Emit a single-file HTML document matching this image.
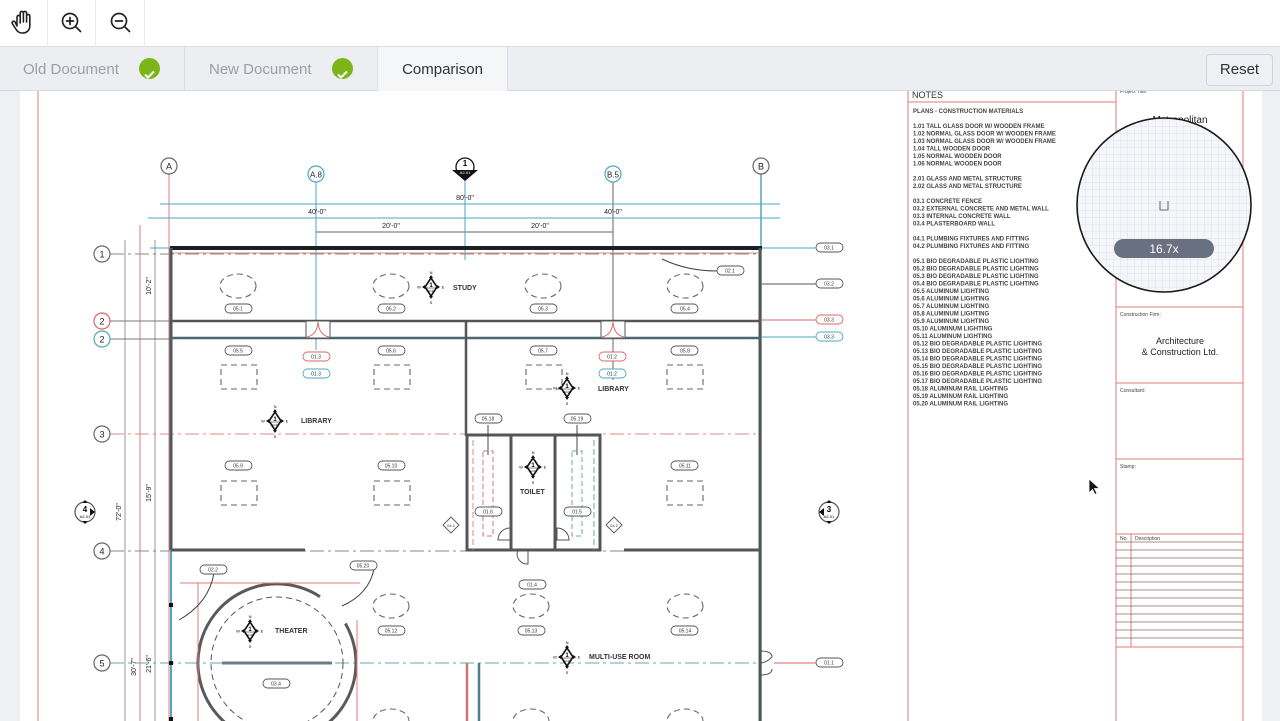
<!DOCTYPE html>
<html><head><meta charset="utf-8"><style>
*{margin:0;padding:0;box-sizing:border-box}
body{width:1280px;height:721px;overflow:hidden;background:#eef0f3;font-family:"Liberation Sans",sans-serif;position:relative}
#tb{position:absolute;left:0;top:0;width:1280px;height:47px;background:#fff;border-bottom:1px solid #dcdfe4}
.tbi{position:absolute;top:0;height:47px;width:48px;border-right:1px solid #e8eaee}
#tabs{position:absolute;left:0;top:47px;width:1280px;height:44px;background:#eceef2;border-bottom:1px solid #d5d8de}
.tab{position:absolute;top:0;height:44px;border-right:1px solid #d9dce2;font-size:15px;color:#9aa0a8;line-height:46px}
.chk{position:absolute;top:12px;width:21px;height:21px;border-radius:50%;background:#7cb518}
#reset{position:absolute;left:1206px;top:7px;width:67px;height:32px;border:1px solid #cfd3da;border-radius:4px;background:#eef0f3;font-size:15px;color:#333;text-align:center;line-height:30px}
#page{position:absolute;left:20px;top:91px;width:1242px;height:630px;background:#fff}
svg text{font-family:"Liberation Sans",sans-serif}
</style></head><body>
<div id="tb">
 <div class="tbi" style="left:0"><svg width="48" height="47" viewBox="0 0 48 47"><path d="M17 26v-9a1.6 1.6 0 013.2 0v6M20.2 22v-9a1.6 1.6 0 013.2 0v9M23.4 21v-8a1.6 1.6 0 013.2 0v9M26.6 22v-6a1.6 1.6 0 013.2 0v10c0 4-3 7-7 7h-1c-3 0-4.5-1.5-6-4l-3.5-5.5a1.6 1.6 0 012.6-1.8L17 26" fill="none" stroke="#222" stroke-width="1.6" stroke-linecap="round" stroke-linejoin="round"/></svg></div>
 <div class="tbi" style="left:48px"><svg width="48" height="47" viewBox="0 0 48 47"><circle cx="22" cy="21" r="7.5" fill="none" stroke="#222" stroke-width="1.7"/><path d="M27.5 26.5l5 5M22 17.5v7M18.5 21h7" stroke="#222" stroke-width="1.7" stroke-linecap="round"/></svg></div>
 <div class="tbi" style="left:97px"><svg width="48" height="47" viewBox="0 0 48 47"><circle cx="22" cy="21" r="7.5" fill="none" stroke="#222" stroke-width="1.7"/><path d="M27.5 26.5l5 5M18.5 21h7" stroke="#222" stroke-width="1.7" stroke-linecap="round"/></svg></div>
</div>
<div id="tabs">
 <div class="tab" style="left:0;width:185px"><span style="position:absolute;left:23px">Old Document</span><div class="chk" style="left:139px;top:11px"><svg width="21" height="21"><path d="M6 10.5l3 3 6-6" fill="none" stroke="#fff" stroke-width="2"/></svg></div></div>
 <div class="tab" style="left:185px;width:193px"><span style="position:absolute;left:24px">New Document</span><div class="chk" style="left:147px;top:11px"><svg width="21" height="21"><path d="M6 10.5l3 3 6-6" fill="none" stroke="#fff" stroke-width="2"/></svg></div></div>
 <div class="tab" style="left:378px;width:130px;background:#f5f6f8;color:#333;text-align:center">Comparison</div>
 <div id="reset">Reset</div>
</div>
<div id="page"></div>
<svg style="position:absolute;left:0;top:91px" width="1280" height="630" viewBox="0 91 1280 630">
<defs>
<g id="comp"><path d="M0-9L6 0 0 9-6 0Z" fill="#fff" stroke="#111" stroke-width="1.6"/><path d="M0-12l2 3h-4zM0 12l2-3h-4zM-9 0l3 2v-4zM9 0l-3 2v-4z" fill="#111"/><line x1="-5" y1="1" x2="5" y2="1" stroke="#111" stroke-width=".5"/><text x="0" y="0" font-size="6" font-weight="bold" text-anchor="middle">1</text><text x="0" y="5" font-size="2.8" text-anchor="middle">A2-01</text><text x="0" y="-13" font-size="4" text-anchor="middle">N</text><text x="0" y="17" font-size="4" text-anchor="middle">S</text><text x="-12" y="1.5" font-size="4" text-anchor="middle">W</text><text x="12" y="1.5" font-size="4" text-anchor="middle">E</text></g>
</defs>
<g fill="none">
<line x1="38" y1="91" x2="38" y2="721" stroke="#e07a7a" stroke-width="1"/>
<line x1="908" y1="91" x2="908" y2="721" stroke="#e07a7a"/>
<line x1="1116" y1="91" x2="1116" y2="721" stroke="#e07a7a"/>
<line x1="1243" y1="91" x2="1243" y2="721" stroke="#e07a7a"/>
<line x1="908" y1="102" x2="1116" y2="102" stroke="#e07a7a"/>
<g stroke="#e07a7a"><line x1="1116" y1="307" x2="1243" y2="307"/><line x1="1116" y1="383" x2="1243" y2="383"/><line x1="1116" y1="459" x2="1243" y2="459"/><line x1="1116" y1="534" x2="1243" y2="534"/><line x1="1131" y1="534" x2="1131" y2="647"/><line x1="1116" y1="647" x2="1243" y2="647"/></g>
<g stroke="#8a6a6e" stroke-width=".8"><line x1="1116" y1="542" x2="1243" y2="542"/><line x1="1116" y1="550" x2="1243" y2="550"/><line x1="1116" y1="558" x2="1243" y2="558"/><line x1="1116" y1="566" x2="1243" y2="566"/><line x1="1116" y1="574" x2="1243" y2="574"/><line x1="1116" y1="582" x2="1243" y2="582"/><line x1="1116" y1="590" x2="1243" y2="590"/><line x1="1116" y1="598" x2="1243" y2="598"/><line x1="1116" y1="606" x2="1243" y2="606"/><line x1="1116" y1="614" x2="1243" y2="614"/><line x1="1116" y1="622" x2="1243" y2="622"/><line x1="1116" y1="630" x2="1243" y2="630"/><line x1="1116" y1="638" x2="1243" y2="638"/></g>
<line x1="125" y1="240" x2="125" y2="721" stroke="#999"/>
<line x1="140" y1="225" x2="140" y2="721" stroke="#e07a7a"/>
<line x1="155" y1="240" x2="155" y2="721" stroke="#999"/>
<line x1="150" y1="248" x2="170" y2="248" stroke="#4aa8c0"/>
<line x1="169" y1="174" x2="169" y2="721" stroke="#e07a7a"/>
<line x1="316" y1="182" x2="316" y2="350" stroke="#4aa8c0"/>
<line x1="613" y1="182" x2="613" y2="380" stroke="#666"/>
<line x1="761" y1="174" x2="761" y2="721" stroke="#4aa8c0" stroke-width="1.5"/>
<line x1="160" y1="204" x2="780" y2="204" stroke="#4aa8c0"/>
<line x1="148" y1="218" x2="780" y2="218" stroke="#4aa8c0"/>
<line x1="316" y1="232" x2="613" y2="232" stroke="#666"/>
<line x1="465" y1="180" x2="465" y2="260" stroke="#4aa8c0"/>
<g stroke="#888" stroke-dasharray="14 4 3 4"><line x1="110" y1="254" x2="760" y2="254"/><line x1="110" y1="434" x2="760" y2="434" stroke="#d88"/><line x1="110" y1="551" x2="760" y2="551"/><line x1="110" y1="663" x2="760" y2="663" stroke="#6aa"/></g>
<line x1="110" y1="321" x2="171" y2="321" stroke="#777"/><line x1="110" y1="339" x2="171" y2="339" stroke="#777"/>
<line x1="170" y1="248" x2="762" y2="248" stroke="#1a1f24" stroke-width="4"/>
<line x1="172" y1="253" x2="758" y2="253" stroke="#d88" stroke-width="1"/>
<line x1="171" y1="248" x2="171" y2="550" stroke="#4a5a62" stroke-width="3"/>
<line x1="171" y1="550" x2="171" y2="721" stroke="#4aa8c0" stroke-width="2"/>
<line x1="760" y1="248" x2="760" y2="721" stroke="#555" stroke-width="3"/>
<line x1="171" y1="321" x2="760" y2="321" stroke="#555" stroke-width="2.5"/>
<line x1="171" y1="338" x2="760" y2="338" stroke="#4d6670" stroke-width="2.5"/>
<line x1="466" y1="321" x2="466" y2="436" stroke="#555" stroke-width="2.5"/>
<rect x="467" y="435" width="133" height="115" stroke="#555" stroke-width="3"/>
<line x1="511" y1="436" x2="511" y2="550" stroke="#555" stroke-width="3"/>
<line x1="555" y1="436" x2="555" y2="550" stroke="#555" stroke-width="3"/>
<line x1="171" y1="550" x2="305" y2="550" stroke="#555" stroke-width="3"/>
<line x1="624" y1="550" x2="760" y2="550" stroke="#555" stroke-width="3"/>
<line x1="467" y1="663" x2="467" y2="721" stroke="#c77" stroke-width="2.5"/><line x1="479" y1="663" x2="479" y2="721" stroke="#4d7d8a" stroke-width="2.5"/>
<g fill="#111"><rect x="169" y="603" width="4" height="4"/><rect x="169" y="661" width="4" height="4"/><rect x="169" y="717" width="4" height="4"/></g>
<rect x="306" y="321" width="24" height="17" fill="#fff" stroke="#555"/><path d="M307 337q10-2 11-15M329 337q-10-2-11-15" stroke="#d66"/>
<rect x="601" y="321" width="24" height="17" fill="#fff" stroke="#555"/><path d="M602 337q10-2 11-15M624 337q-10-2-11-15" stroke="#d66"/>
<path d="M498 540a12 12 0 0112-12v12z" stroke="#555"/><path d="M569 540a12 12 0 00-12-12v12z" stroke="#555"/>
<path d="M528 550v14a10 10 0 01-10-14" stroke="#555"/>
<path d="M760 651q12 0 12 6q-6 6-12 6M760 675q12 0 12-6" stroke="#555"/>
<path d="M320 596.7A79 79 0 1 0 345.4 623.5" stroke="#5a5a5a" stroke-width="3"/>
<circle cx="277" cy="663" r="66" stroke="#555" stroke-dasharray="6 4"/>
<line x1="222" y1="663" x2="332" y2="663" stroke="#6a7f86" stroke-width="3"/>
<line x1="180" y1="583" x2="360" y2="583" stroke="#e07a7a"/><line x1="198" y1="583" x2="198" y2="721" stroke="#e07a7a"/><line x1="357" y1="620" x2="357" y2="721" stroke="#e07a7a"/>
<path d="M214 573q-5 30-35 47M374 569q-5 25-32 37M717 271q-30 0-55-12M577 425v30M488 425v30" stroke="#444"/>
<rect x="483" y="451" width="10" height="85" stroke="#c77" stroke-dasharray="5 3"/>
<rect x="572" y="451" width="10" height="85" stroke="#6aa" stroke-dasharray="5 3"/>
<line x1="473" y1="440" x2="473" y2="550" stroke="#d88" stroke-dasharray="6 3"/><line x1="594" y1="440" x2="594" y2="550" stroke="#6aa" stroke-dasharray="6 3"/>
<g stroke="#666" stroke-dasharray="6 4" stroke-width="1.1">
<ellipse cx="238" cy="286" rx="18" ry="12"/><ellipse cx="391" cy="286" rx="18" ry="12"/><ellipse cx="543" cy="286" rx="18" ry="12"/><ellipse cx="685" cy="286" rx="18" ry="12"/>
<ellipse cx="391" cy="606" rx="18" ry="12"/><ellipse cx="531" cy="606" rx="18" ry="12"/><ellipse cx="685" cy="606" rx="18" ry="12"/>
<ellipse cx="391" cy="721" rx="18" ry="12"/><ellipse cx="531" cy="721" rx="18" ry="12"/><ellipse cx="685" cy="721" rx="18" ry="12"/>
<rect x="221" y="365" width="36" height="24"/><rect x="374" y="365" width="36" height="24"/><rect x="526" y="365" width="36" height="24"/><rect x="667" y="365" width="36" height="24"/>
<rect x="221" y="481" width="36" height="24"/><rect x="374" y="481" width="36" height="24"/><rect x="667" y="481" width="36" height="24"/>
</g>
</g>
<g font-size="9" text-anchor="middle" fill="#222">
<g fill="#fff" stroke-width="1.2"><circle cx="169" cy="166" r="8" stroke="#666"/><circle cx="761" cy="166" r="8" stroke="#666"/><circle cx="316" cy="174" r="8" stroke="#4aa8c0"/><circle cx="613" cy="174" r="8" stroke="#4aa8c0"/>
<circle cx="102" cy="254" r="8" stroke="#666"/><circle cx="102" cy="321" r="8" stroke="#d66"/><circle cx="102" cy="339" r="8" stroke="#4aa8c0"/><circle cx="102" cy="434" r="8" stroke="#666"/><circle cx="102" cy="551" r="8" stroke="#666"/><circle cx="102" cy="663" r="8" stroke="#666"/></g>
<text x="169" y="169.5">A</text><text x="761" y="169.5">B</text><text x="316" y="177.5" font-size="8">A.8</text><text x="613" y="177.5" font-size="8">B.5</text>
<text x="102" y="257.5">1</text><text x="102" y="324.5">2</text><text x="102" y="342.5">2</text><text x="102" y="437.5">3</text><text x="102" y="554.5">4</text><text x="102" y="666.5">5</text>
<text x="465" y="200" font-size="7">80'-0"</text><text x="317" y="214" font-size="7">40'-0"</text><text x="613" y="214" font-size="7">40'-0"</text><text x="391" y="228" font-size="7">20'-0"</text><text x="540" y="228" font-size="7">20'-0"</text>
<text transform="translate(151,286) rotate(-90)" font-size="7">10'-2"</text><text transform="translate(151,493) rotate(-90)" font-size="7">15'-9"</text><text transform="translate(121,512) rotate(-90)" font-size="7">72'-0"</text><text transform="translate(136,667) rotate(-90)" font-size="7">30'-7"</text><text transform="translate(151,664) rotate(-90)" font-size="7">21'-6"</text>
</g>
<g><circle cx="465" cy="167" r="9" fill="#fff" stroke="#111" stroke-width="1.3"/><path d="M452 170h26l-13 11z" fill="#111"/><text x="465" y="166" font-size="8" font-weight="bold" text-anchor="middle">1</text><text x="465" y="174" font-size="4" text-anchor="middle" fill="#fff">A2-01</text></g>
<g><circle cx="85" cy="512" r="10" fill="#fff" stroke="#555" stroke-width="1.2"/><path d="M95 512l-5-4v8zM85 500l3 3h-6zM85 524l3-3h-6z" fill="#111"/><text x="85" y="512" font-size="8" font-weight="bold" text-anchor="middle">4</text><text x="85" y="518" font-size="4" text-anchor="middle">A2-01</text></g>
<g><circle cx="829" cy="512" r="10" fill="#fff" stroke="#555" stroke-width="1.2"/><path d="M819 512l5-4v8zM829 500l3 3h-6zM829 524l3-3h-6z" fill="#111"/><text x="829" y="512" font-size="8" font-weight="bold" text-anchor="middle">3</text><text x="829" y="518" font-size="4" text-anchor="middle">A2-01</text></g>
<use href="#comp" x="431" y="287"/><use href="#comp" x="275" y="421"/><use href="#comp" x="567" y="388"/><use href="#comp" x="533" y="467"/><use href="#comp" x="250" y="631"/><use href="#comp" x="567" y="657"/>
<g font-size="7" font-weight="bold" fill="#333"><text x="453" y="290">STUDY</text><text x="301" y="423">LIBRARY</text><text x="598" y="391">LIBRARY</text><text x="520" y="494">TOILET</text><text x="275" y="633">THEATER</text><text x="589" y="659">MULTI-USE ROOM</text></g>
<g font-size="5" text-anchor="middle" fill="#333">
<g fill="#fff" stroke="#555" stroke-width=".9">
<rect x="225" y="304" width="27" height="9" rx="4.5"/><rect x="378" y="304" width="27" height="9" rx="4.5"/><rect x="530" y="304" width="27" height="9" rx="4.5"/><rect x="671" y="304" width="27" height="9" rx="4.5"/>
<rect x="225" y="346" width="27" height="9" rx="4.5"/><rect x="378" y="346" width="27" height="9" rx="4.5"/><rect x="530" y="346" width="27" height="9" rx="4.5"/><rect x="671" y="346" width="27" height="9" rx="4.5"/>
<rect x="225" y="461" width="27" height="9" rx="4.5"/><rect x="378" y="461" width="27" height="9" rx="4.5"/><rect x="671" y="461" width="27" height="9" rx="4.5"/>
<rect x="475" y="414" width="27" height="9" rx="4.5"/><rect x="564" y="414" width="27" height="9" rx="4.5"/><rect x="475" y="507" width="27" height="9" rx="4.5"/><rect x="564" y="507" width="27" height="9" rx="4.5"/>
<rect x="519" y="580" width="27" height="9" rx="4.5"/><rect x="378" y="626" width="27" height="9" rx="4.5"/><rect x="518" y="626" width="27" height="9" rx="4.5"/><rect x="671" y="626" width="27" height="9" rx="4.5"/>
<rect x="200" y="565" width="27" height="9" rx="4.5"/><rect x="350" y="561" width="27" height="9" rx="4.5"/><rect x="263" y="679" width="27" height="9" rx="4.5"/>
<rect x="717" y="266" width="27" height="9" rx="4.5"/><rect x="816" y="243" width="27" height="9" rx="4.5"/><rect x="816" y="279" width="27" height="9" rx="4.5"/><rect x="816" y="658" width="27" height="9" rx="4.5"/>
<rect x="303" y="352" width="27" height="9" rx="4.5" stroke="#d66"/><rect x="303" y="369" width="27" height="9" rx="4.5" stroke="#4aa8c0"/><rect x="599" y="352" width="27" height="9" rx="4.5" stroke="#d66"/><rect x="599" y="369" width="27" height="9" rx="4.5" stroke="#4aa8c0"/>
<rect x="816" y="315" width="27" height="9" rx="4.5" stroke="#d66"/><rect x="816" y="332" width="27" height="9" rx="4.5" stroke="#4aa8c0"/>
<path d="M451 517l8 8-8 8-8-8z"/><path d="M614 517l8 8-8 8-8-8z"/>
</g>
<text x="238" y="310.5">05.1</text><text x="391" y="310.5">05.2</text><text x="543" y="310.5">05.3</text><text x="685" y="310.5">05.4</text>
<text x="238" y="352.5">05.5</text><text x="391" y="352.5">05.6</text><text x="543" y="352.5">05.7</text><text x="685" y="352.5">05.8</text>
<text x="238" y="467.5">05.9</text><text x="391" y="467.5">05.10</text><text x="685" y="467.5">05.11</text>
<text x="488" y="420.5">05.18</text><text x="577" y="420.5">05.19</text><text x="488" y="513.5">01.6</text><text x="577" y="513.5">01.5</text>
<text x="532" y="586.5">01.4</text><text x="391" y="632.5">05.12</text><text x="531" y="632.5">05.13</text><text x="685" y="632.5">05.14</text>
<text x="213" y="571.5">02.2</text><text x="363" y="567.5">05.20</text><text x="276" y="685.5">03.4</text>
<text x="730" y="272.5">02.1</text><text x="829" y="249.5">03.1</text><text x="829" y="285.5">03.2</text><text x="829" y="664.5">01.1</text>
<text x="316" y="358.5">01.3</text><text x="316" y="375.5">01.3</text><text x="612" y="358.5">01.2</text><text x="612" y="375.5">01.2</text>
<text x="829" y="321.5">03.3</text><text x="829" y="338.5">03.3</text><text x="451" y="527" font-size="4">04.1</text><text x="614" y="527" font-size="4">04.2</text>
</g>
<g stroke-width=".9"><line x1="762" y1="248" x2="816" y2="248" stroke="#4aa8c0"/><line x1="762" y1="284" x2="816" y2="284" stroke="#555"/><line x1="762" y1="320" x2="816" y2="320" stroke="#d66"/><line x1="762" y1="337" x2="816" y2="337" stroke="#4aa8c0"/><line x1="774" y1="663" x2="816" y2="663" stroke="#d66"/></g>
<text x="912" y="98" font-size="9" fill="#333">NOTES</text>
<g font-size="6" font-weight="bold" fill="#444">
<text x="913" y="113">PLANS - CONSTRUCTION MATERIALS</text>
<text x="913" y="128">1.01 TALL GLASS DOOR W/ WOODEN FRAME</text><text x="913" y="135.5">1.02 NORMAL GLASS DOOR W/ WOODEN FRAME</text><text x="913" y="143">1.03 NORMAL GLASS DOOR W/ WOODEN FRAME</text><text x="913" y="150.5">1.04 TALL WOODEN DOOR</text><text x="913" y="158">1.05 NORMAL WOODEN DOOR</text><text x="913" y="165.5">1.06 NORMAL WOODEN DOOR</text>
<text x="913" y="180.5">2.01 GLASS AND METAL STRUCTURE</text><text x="913" y="188">2.02 GLASS AND METAL STRUCTURE</text>
<text x="913" y="203">03.1 CONCRETE FENCE</text><text x="913" y="210.5">03.2 EXTERNAL CONCRETE AND METAL WALL</text><text x="913" y="218">03.3 INTERNAL CONCRETE WALL</text><text x="913" y="225.5">03.4 PLASTERBOARD WALL</text>
<text x="913" y="240.5">04.1 PLUMBING FIXTURES AND FITTING</text><text x="913" y="248">04.2 PLUMBING FIXTURES AND FITTING</text>
<text x="913" y="263">05.1 BIO DEGRADABLE PLASTIC LIGHTING</text><text x="913" y="270.5">05.2 BIO DEGRADABLE PLASTIC LIGHTING</text><text x="913" y="278">05.3 BIO DEGRADABLE PLASTIC LIGHTING</text><text x="913" y="285.5">05.4 BIO DEGRADABLE PLASTIC LIGHTING</text><text x="913" y="293">05.5 ALUMINUM LIGHTING</text><text x="913" y="300.5">05.6 ALUMINUM LIGHTING</text><text x="913" y="308">05.7 ALUMINUM LIGHTING</text><text x="913" y="315.5">05.8 ALUMINUM LIGHTING</text><text x="913" y="323">05.9 ALUMINUM LIGHTING</text><text x="913" y="330.5">05.10 ALUMINUM LIGHTING</text><text x="913" y="338">05.11 ALUMINUM LIGHTING</text><text x="913" y="345.5">05.12 BIO DEGRADABLE PLASTIC LIGHTING</text><text x="913" y="353">05.13 BIO DEGRADABLE PLASTIC LIGHTING</text><text x="913" y="360.5">05.14 BIO DEGRADABLE PLASTIC LIGHTING</text><text x="913" y="368">05.15 BIO DEGRADABLE PLASTIC LIGHTING</text><text x="913" y="375.5">05.16 BIO DEGRADABLE PLASTIC LIGHTING</text><text x="913" y="383">05.17 BIO DEGRADABLE PLASTIC LIGHTING</text><text x="913" y="390.5">05.18 ALUMINUM RAIL LIGHTING</text><text x="913" y="398">05.19 ALUMINUM RAIL LIGHTING</text><text x="913" y="405.5">05.20 ALUMINUM RAIL LIGHTING</text>
</g>
<g font-size="5" fill="#444"><text x="1120" y="93">Project Title:</text><text x="1120" y="316">Construction Firm:</text><text x="1120" y="392">Consultant:</text><text x="1120" y="468">Stamp:</text><text x="1120" y="540">No.</text><text x="1135" y="540">Description</text></g>
<text x="1180" y="123" font-size="10" text-anchor="middle" fill="#222">Metropolitan</text>
<text x="1180" y="344" font-size="9" text-anchor="middle" fill="#222">Architecture</text><text x="1180" y="355" font-size="9" text-anchor="middle" fill="#222">&amp; Construction Ltd.</text>
<defs><pattern id="gr" width="7" height="7" patternUnits="userSpaceOnUse"><path d="M7 0H0V7" fill="none" stroke="#d6dae2" stroke-width=".7"/></pattern><clipPath id="mc"><circle cx="1164" cy="205" r="87"/></clipPath></defs>
<circle cx="1164" cy="205" r="87" fill="#f5f6f9"/>
<rect x="1077" y="118" width="174" height="174" fill="url(#gr)" clip-path="url(#mc)"/>
<circle cx="1164" cy="205" r="87" fill="none" stroke="#1a1a1a" stroke-width="1.6"/>
<path d="M1160 201v9h8v-9" fill="none" stroke="#444" stroke-width=".8"/>
<rect x="1114" y="239" width="100" height="19" rx="9.5" fill="#697080"/>
<text x="1164" y="253" font-size="12" text-anchor="middle" fill="#fff">16.7x</text>
<path d="M1089 479v14l3.5-3.5 2.5 5 2-1-2.5-5h5z" fill="#111" stroke="#fff" stroke-width=".8"/>
</svg>
</body></html>
